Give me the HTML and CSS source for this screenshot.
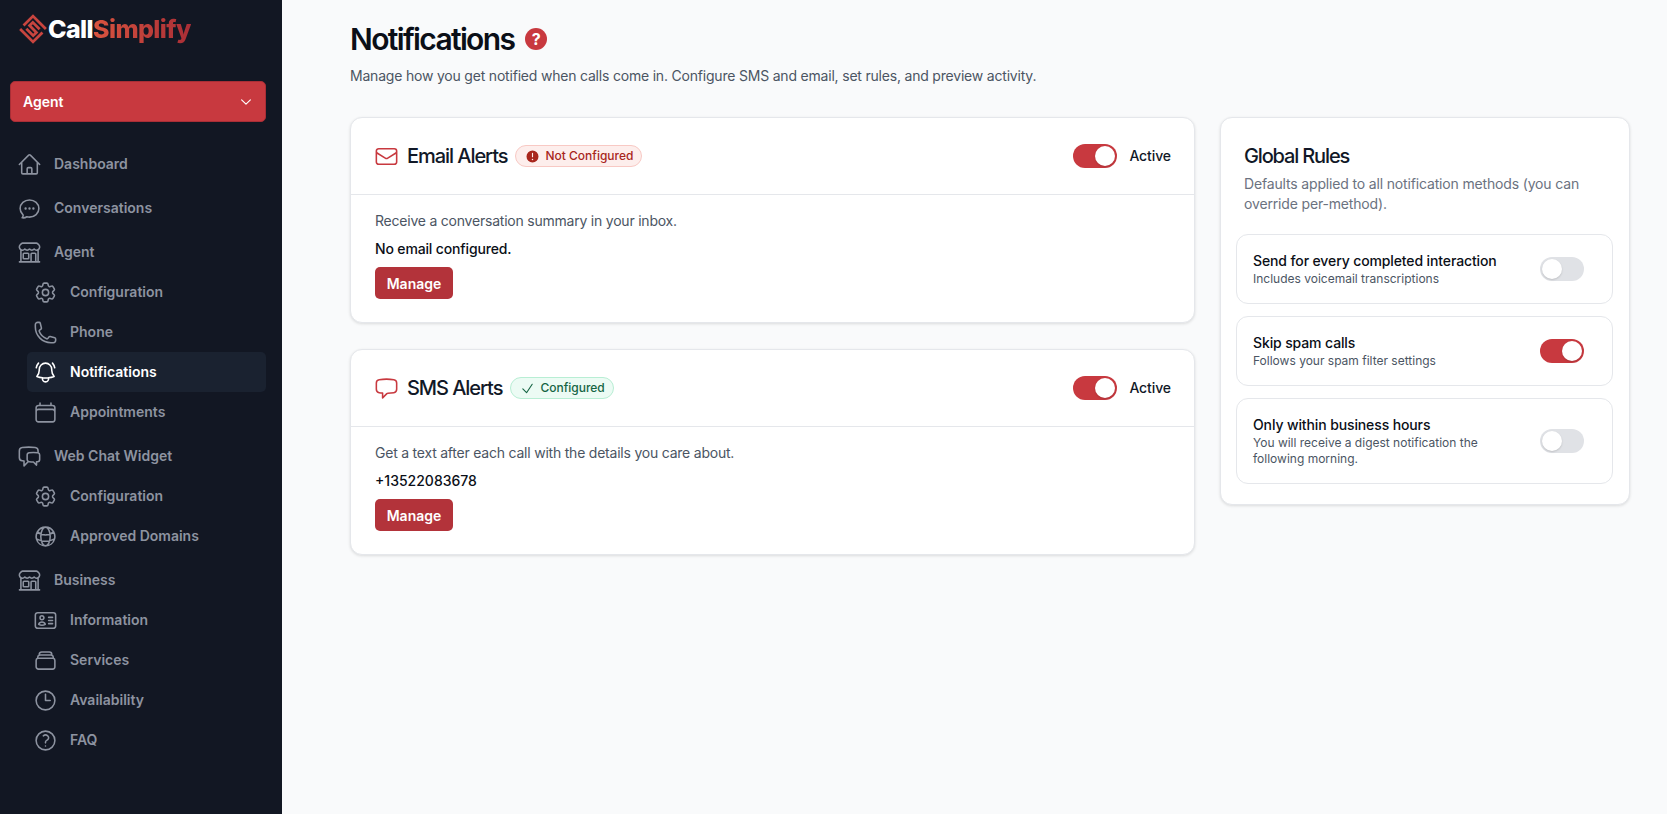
FILE: index.html
```html
<!DOCTYPE html>
<html lang="en">
  <head>
    <meta charset="UTF-8" />
    <meta name="viewport" content="width=device-width, initial-scale=1.0" />
    <title>Notifications</title>
    <link rel="stylesheet" href="styles.css">
  </head>
  <body>
    <svg class="sprite" xmlns="http://www.w3.org/2000/svg">
      <symbol id="i-home" viewBox="0 0 24 24"><path d="M2.25 12l8.954-8.955c.44-.439 1.152-.439 1.591 0L21.75 12M4.5 9.75v10.125c0 .621.504 1.125 1.125 1.125H9.75v-4.875c0-.621.504-1.125 1.125-1.125h2.25c.621 0 1.125.504 1.125 1.125V21h4.125c.621 0 1.125-.504 1.125-1.125V9.75M8.25 21h8.25"/></symbol>
      <symbol id="i-chat" viewBox="0 0 24 24"><path d="M8.625 12a.375.375 0 11-.75 0 .375.375 0 01.75 0zm0 0H8.25m4.125 0a.375.375 0 11-.75 0 .375.375 0 01.75 0zm0 0H12m4.125 0a.375.375 0 11-.75 0 .375.375 0 01.75 0zm0 0h-.375M21 12c0 4.556-4.03 8.25-9 8.25a9.764 9.764 0 01-2.555-.337A5.972 5.972 0 015.41 20.97a5.969 5.969 0 01-.474-.065 4.48 4.48 0 00.978-2.025c.09-.457-.133-.901-.467-1.226C3.93 16.178 3 14.189 3 12c0-4.556 4.03-8.25 9-8.25s9 3.694 9 8.25z"/></symbol>
      <symbol id="i-store" viewBox="0 0 24 24"><path d="M13.5 21v-7.5a.75.75 0 01.75-.75h3a.75.75 0 01.75.75V21m-4.5 0H2.36m11.14 0H18m0 0h3.64m-1.39 0V9.349m-16.5 11.65V9.35m0 0a3.001 3.001 0 003.75-.615A2.993 2.993 0 009.75 9.75c.896 0 1.7-.393 2.25-1.016a2.993 2.993 0 002.25 1.016c.896 0 1.7-.393 2.25-1.016a3.001 3.001 0 003.75.614m-16.5 0a3.004 3.004 0 01-.621-4.72L4.318 3.44A1.5 1.5 0 015.378 3h13.243a1.5 1.5 0 011.06.44l1.19 1.189a3 3 0 01-.621 4.72m-13.5 8.65h3.75a.75.75 0 00.75-.75V13.5a.75.75 0 00-.75-.75H6.75a.75.75 0 00-.75.75v3.75c0 .415.336.75.75.75z"/></symbol>
      <symbol id="i-cog" viewBox="0 0 24 24"><path d="M9.594 3.94c.09-.542.56-.94 1.11-.94h2.593c.55 0 1.02.398 1.11.94l.213 1.281c.063.374.313.686.645.87.074.04.147.083.22.127.324.196.72.257 1.075.124l1.217-.456a1.125 1.125 0 011.37.49l1.296 2.247a1.125 1.125 0 01-.26 1.431l-1.003.827c-.293.24-.438.613-.431.992a6.759 6.759 0 010 .255c-.007.378.138.75.43.99l1.005.828c.424.35.534.954.26 1.43l-1.298 2.247a1.125 1.125 0 01-1.369.491l-1.217-.456c-.355-.133-.75-.072-1.076.124a6.57 6.57 0 01-.22.128c-.331.183-.581.495-.644.869l-.213 1.28c-.09.543-.56.941-1.11.941h-2.594c-.55 0-1.02-.398-1.11-.94l-.213-1.281c-.062-.374-.312-.686-.644-.87a6.52 6.52 0 01-.22-.127c-.325-.196-.72-.257-1.076-.124l-1.217.456a1.125 1.125 0 01-1.369-.49l-1.297-2.247a1.125 1.125 0 01.26-1.431l1.004-.827c.292-.24.437-.613.43-.992a6.932 6.932 0 010-.255c.007-.378-.138-.75-.43-.99l-1.004-.828a1.125 1.125 0 01-.26-1.43l1.297-2.247a1.125 1.125 0 011.37-.491l1.216.456c.356.133.751.072 1.076-.124.072-.044.146-.087.22-.128.332-.183.582-.495.644-.869l.214-1.281z"/><path d="M15 12a3 3 0 11-6 0 3 3 0 016 0z"/></symbol>
      <symbol id="i-phone" viewBox="0 0 24 24"><path d="M2.25 6.75c0 8.284 6.716 15 15 15h2.25a2.25 2.25 0 002.25-2.25v-1.372c0-.516-.351-.966-.852-1.091l-4.423-1.106c-.44-.11-.902.055-1.173.417l-.97 1.293c-.282.376-.769.542-1.21.38a12.035 12.035 0 01-7.143-7.143c-.162-.441.004-.928.38-1.21l1.293-.97c.363-.271.527-.734.417-1.173L6.963 3.102a1.125 1.125 0 00-1.091-.852H4.5A2.25 2.25 0 002.25 4.5v2.25z"/></symbol>
      <symbol id="i-bell" viewBox="0 0 24 24"><path d="M14.857 17.082a23.848 23.848 0 005.454-1.31A8.967 8.967 0 0118 9.75v-.7V9A6 6 0 006 9v.75a8.967 8.967 0 01-2.312 6.022c1.733.64 3.56 1.085 5.455 1.31m5.714 0a24.255 24.255 0 01-5.714 0m5.714 0a3 3 0 11-5.714 0M3.124 7.5A8.969 8.969 0 015.292 3m13.416 0a8.969 8.969 0 012.168 4.5"/></symbol>
      <symbol id="i-calendar" viewBox="0 0 24 24"><path d="M6.75 3v2.25M17.25 3v2.25M3 18.75V7.5a2.25 2.25 0 012.25-2.25h13.5A2.25 2.25 0 0121 7.5v11.25m-18 0A2.25 2.25 0 005.25 21h13.5A2.25 2.25 0 0021 18.75m-18 0v-7.5A2.25 2.25 0 015.25 9h13.5A2.25 2.25 0 0121 11.25v7.5"/></symbol>
      <symbol id="i-bubbles" viewBox="0 0 24 24"><path d="M20.25 8.511c.884.284 1.5 1.128 1.5 2.097v4.286c0 1.136-.847 2.1-1.98 2.193-.34.027-.68.052-1.02.072v3.091l-3-3c-1.354 0-2.694-.055-4.02-.163a2.115 2.115 0 01-.825-.242m9.345-8.334a2.126 2.126 0 00-.476-.095 48.64 48.64 0 00-8.048 0c-1.131.094-1.976 1.057-1.976 2.192v4.286c0 .837.46 1.58 1.155 1.951m9.345-8.334V6.637c0-1.621-1.152-3.026-2.76-3.235A48.455 48.455 0 0011.25 3c-2.115 0-4.198.137-6.24.402-1.608.209-2.76 1.614-2.76 3.235v6.226c0 1.621 1.152 3.026 2.76 3.235.577.075 1.157.14 1.74.194V21l4.155-4.155"/></symbol>
      <symbol id="i-globe" viewBox="0 0 24 24"><path d="M12 21a9.004 9.004 0 008.716-6.747M12 21a9.004 9.004 0 01-8.716-6.747M12 21c2.485 0 4.5-4.03 4.5-9S14.485 3 12 3m0 18c-2.485 0-4.5-4.03-4.5-9S9.515 3 12 3m0 0a8.997 8.997 0 017.843 4.582M12 3a8.997 8.997 0 00-7.843 4.582m15.686 0A11.953 11.953 0 0112 10.5c-2.998 0-5.74-1.1-7.843-2.918m15.686 0A8.959 8.959 0 0121 12c0 .778-.099 1.533-.284 2.253m0 0A17.919 17.919 0 0112 16.5c-3.162 0-6.133-.815-8.716-2.247m0 0A9.015 9.015 0 013 12c0-1.605.42-3.113 1.157-4.418"/></symbol>
      <symbol id="i-card" viewBox="0 0 24 24"><path d="M15 9h3.75M15 12h3.75M15 15h3.75M4.5 19.5h15a2.25 2.25 0 002.25-2.25V6.75A2.25 2.25 0 0019.5 4.5h-15a2.25 2.25 0 00-2.25 2.25v10.5A2.25 2.25 0 004.5 19.5zm6-10.125a1.875 1.875 0 11-3.75 0 1.875 1.875 0 013.75 0zm1.294 6.336a6.721 6.721 0 01-3.17.789 6.721 6.721 0 01-3.168-.789 3.376 3.376 0 016.338 0z"/></symbol>
      <symbol id="i-stack" viewBox="0 0 24 24"><path d="M6 6.878V6a2.25 2.25 0 012.25-2.25h7.5A2.25 2.25 0 0118 6v.878m-12 0c.235-.083.487-.128.75-.128h10.5c.263 0 .515.045.75.128m-12 0A2.25 2.25 0 004.5 9v.878m13.5-3A2.25 2.25 0 0119.5 9v.878m0 0a2.246 2.246 0 00-.75-.128H5.25c-.263 0-.515.045-.75.128m15 0A2.25 2.25 0 0121 12v6a2.25 2.25 0 01-2.25 2.25H5.25A2.25 2.25 0 013 18v-6c0-.98.626-1.813 1.5-2.122"/></symbol>
      <symbol id="i-clock" viewBox="0 0 24 24"><path d="M12 6v6h4.5m4.5 0a9 9 0 11-18 0 9 9 0 0118 0z"/></symbol>
      <symbol id="i-question" viewBox="0 0 24 24"><path d="M9.879 7.519c1.171-1.025 3.071-1.025 4.242 0 1.172 1.025 1.172 2.687 0 3.712-.203.179-.43.326-.67.442-.745.361-1.45.999-1.45 1.827v.75M21 12a9 9 0 11-18 0 9 9 0 0118 0zm-9 5.25h.008v.008H12v-.008z"/></symbol>
      <symbol id="i-envelope" viewBox="0 0 24 24"><path d="M21.75 6.75v10.5a2.25 2.25 0 01-2.25 2.25h-15a2.25 2.25 0 01-2.25-2.25V6.75m19.5 0A2.25 2.25 0 0019.5 4.5h-15a2.25 2.25 0 00-2.25 2.25m19.5 0v.243a2.25 2.25 0 01-1.07 1.916l-7.5 4.615a2.25 2.25 0 01-2.36 0L3.32 8.91a2.25 2.25 0 01-1.07-1.916V6.75"/></symbol>
      <symbol id="i-sms" viewBox="0 0 24 24"><path d="M2.25 12.76c0 1.6 1.123 2.994 2.707 3.227 1.087.16 2.185.283 3.293.369V21l4.076-4.076a1.526 1.526 0 011.037-.443 48.282 48.282 0 005.68-.494c1.584-.233 2.707-1.626 2.707-3.228V6.741c0-1.602-1.123-2.995-2.707-3.228A48.394 48.394 0 0012 3c-2.392 0-4.744.175-7.043.513C3.373 3.746 2.25 5.14 2.25 6.741v6.018z"/></symbol>
    </svg>

    <div class="app">
      <aside class="sidebar">
        <div class="logo">
          <svg class="logo-mark" viewBox="-4 -4 28 28">
            <g transform="rotate(45 10 10)">
              <path d="M18.5 1.5H1.5V14M1.5 18.5H18.5V6" />
              <path d="M14.5 5.75H5.5V10H14.5V14.25H5.5" />
            </g>
          </svg>
          <span class="logo-call">Call</span><span class="logo-simplify">Simplify</span>
        </div>

        <div class="picker">
          <span>Agent</span>
          <svg class="picker-chevron" viewBox="0 0 24 24"><path d="M19.5 8.25l-7.5 7.5-7.5-7.5" /></svg>
        </div>

        <nav class="nav">
          <a class="nav-item"><svg class="icon"><use href="#i-home" /></svg>Dashboard</a>
          <a class="nav-item"><svg class="icon"><use href="#i-chat" /></svg>Conversations</a>
          <div class="nav-group">
            <a class="nav-item"><svg class="icon"><use href="#i-store" /></svg>Agent</a>
            <a class="nav-item sub"><svg class="icon"><use href="#i-cog" /></svg>Configuration</a>
            <a class="nav-item sub"><svg class="icon"><use href="#i-phone" /></svg>Phone</a>
            <a class="nav-item sub active"><svg class="icon"><use href="#i-bell" /></svg>Notifications</a>
            <a class="nav-item sub"><svg class="icon"><use href="#i-calendar" /></svg>Appointments</a>
          </div>
          <div class="nav-group">
            <a class="nav-item"><svg class="icon"><use href="#i-bubbles" /></svg>Web Chat Widget</a>
            <a class="nav-item sub"><svg class="icon"><use href="#i-cog" /></svg>Configuration</a>
            <a class="nav-item sub"><svg class="icon"><use href="#i-globe" /></svg>Approved Domains</a>
          </div>
          <div class="nav-group">
            <a class="nav-item"><svg class="icon"><use href="#i-store" /></svg>Business</a>
            <a class="nav-item sub"><svg class="icon"><use href="#i-card" /></svg>Information</a>
            <a class="nav-item sub"><svg class="icon"><use href="#i-stack" /></svg>Services</a>
            <a class="nav-item sub"><svg class="icon"><use href="#i-clock" /></svg>Availability</a>
            <a class="nav-item sub"><svg class="icon"><use href="#i-question" /></svg>FAQ</a>
          </div>
        </nav>
      </aside>

      <main class="main">
        <div class="page-title">
          <h1>Notifications</h1>
          <span class="help">?</span>
        </div>
        <p class="page-sub">Manage how you get notified when calls come in. Configure SMS and email, set rules, and preview activity.</p>

        <div class="columns">
          <div class="methods">
            <section class="card">
              <header class="card-head">
                <svg class="icon method-icon"><use href="#i-envelope" /></svg>
                <h2>Email Alerts</h2>
                <span class="badge badge-bad">
                  <svg class="badge-icon" viewBox="0 0 20 20"><path fill-rule="evenodd" d="M18 10a8 8 0 11-16 0 8 8 0 0116 0zm-8-5a.75.75 0 01.75.75v4.5a.75.75 0 01-1.5 0v-4.5A.75.75 0 0110 5zm0 10a1 1 0 100-2 1 1 0 000 2z" /></svg>
                  Not Configured
                </span>
                <span class="switch on head-switch"></span>
                <span class="switch-label">Active</span>
              </header>
              <div class="card-body">
                <p class="muted">Receive a conversation summary in your inbox.</p>
                <p class="value">No email configured.</p>
                <button class="btn">Manage</button>
              </div>
            </section>

            <section class="card">
              <header class="card-head">
                <svg class="icon method-icon"><use href="#i-sms" /></svg>
                <h2>SMS Alerts</h2>
                <span class="badge badge-ok">
                  <svg class="badge-check" viewBox="0 0 24 24"><path d="M4.5 12.75l6 6 9-13.5" /></svg>
                  Configured
                </span>
                <span class="switch on head-switch"></span>
                <span class="switch-label">Active</span>
              </header>
              <div class="card-body">
                <p class="muted">Get a text after each call with the details you care about.</p>
                <p class="value phone">+13522083678</p>
                <button class="btn">Manage</button>
              </div>
            </section>
          </div>

          <section class="card rules">
            <h2>Global Rules</h2>
            <p class="rules-sub">Defaults applied to all notification methods (you can override per-method).</p>
            <div class="rule">
              <div class="rule-text">
                <div class="rule-title">Send for every completed interaction</div>
                <div class="rule-note">Includes voicemail transcriptions</div>
              </div>
              <span class="switch"></span>
            </div>
            <div class="rule">
              <div class="rule-text">
                <div class="rule-title">Skip spam calls</div>
                <div class="rule-note">Follows your spam filter settings</div>
              </div>
              <span class="switch on"></span>
            </div>
            <div class="rule">
              <div class="rule-text">
                <div class="rule-title">Only within business hours</div>
                <div class="rule-note">You will receive a digest notification the following morning.</div>
              </div>
              <span class="switch"></span>
            </div>
          </section>
        </div>
      </main>
    </div>
  </body>
</html>
```

FILE: styles.css
```css
* {
  box-sizing: border-box;
}
body {
  margin: 0;
  font-family: Inter, "Liberation Sans", sans-serif;
  font-size: 14px;
  line-height: 20px;
  background-color: #f9fafb;
  color: #111827;
}
h1, h2, p {
  margin: 0;
}
.sprite {
  display: none;
}
.icon {
  width: 25px;
  height: 25px;
  flex: none;
  fill: none;
  stroke: currentColor;
  stroke-width: 1.5;
  stroke-linecap: round;
  stroke-linejoin: round;
}
.app {
  display: flex;
  min-height: 814px;
}

/* sidebar */
.sidebar {
  width: 282px;
  flex: none;
  background-color: #121723;
  padding: 14px 16px 0 10px;
}
.logo {
  display: flex;
  align-items: center;
  height: 30px;
  padding-left: 8px;
  font-size: 25px;
  line-height: 32px;
  font-weight: 800;
  letter-spacing: -0.6px;
}
.logo-mark {
  width: 30px;
  height: 30px;
  flex: none;
  fill: none;
  stroke: #c8453f;
  stroke-width: 2.6;
}
.logo-call {
  color: #fff;
}
.logo-simplify {
  background: linear-gradient(90deg, #d9543f, #a92e36);
  -webkit-background-clip: text;
  background-clip: text;
  color: transparent;
}
.picker {
  display: flex;
  align-items: center;
  justify-content: space-between;
  height: 41px;
  margin-top: 37px;
  padding: 0 12px;
  background-color: #c8393f;
  border: 1px solid #a92e36;
  border-radius: 5px;
  color: #fff;
  font-weight: 600;
}
.picker-chevron {
  width: 14px;
  height: 14px;
  fill: none;
  stroke: #fff;
  stroke-width: 2;
  stroke-linecap: round;
  stroke-linejoin: round;
}
.nav {
  display: flex;
  flex-direction: column;
  gap: 4px;
  margin-top: 22px;
}
.nav-item {
  display: flex;
  align-items: center;
  gap: 12px;
  height: 40px;
  padding-left: 7px;
  color: #8d93a0;
  font-weight: 600;
}
.nav-item.sub {
  margin-left: 17px;
  padding-left: 6px;
}
.nav-item.active {
  background-color: #1a2230;
  border-radius: 5px;
  color: #fff;
}

/* main */
.main {
  flex: 1;
  padding: 20px 37px 0 68px;
}
.page-title {
  display: flex;
  align-items: center;
  gap: 11px;
}
h1 {
  font-size: 30px;
  line-height: 38px;
  font-weight: 600;
  letter-spacing: -1.65px;
  color: #0b0f17;
}
.help {
  display: flex;
  align-items: center;
  justify-content: center;
  width: 22px;
  height: 22px;
  border-radius: 50%;
  background-color: #c8393f;
  color: #fff;
  font-size: 16px;
  font-weight: 700;
}
.page-sub {
  margin-top: 8px;
  color: #4b5563;
  letter-spacing: -0.2px;
}
.columns {
  display: grid;
  grid-template-columns: 1fr 410px;
  gap: 25px;
  align-items: start;
  margin-top: 31px;
}
.methods {
  display: flex;
  flex-direction: column;
  gap: 26px;
}
.card {
  background-color: #fff;
  border: 1px solid #e5e7eb;
  border-radius: 12px;
  box-shadow: 0 1px 3px rgba(0, 0, 0, 0.12);
}
.card-head {
  display: flex;
  align-items: center;
  height: 77px;
  padding: 0 23px;
  border-bottom: 1px solid #e5e7eb;
}
.method-icon {
  color: #c8393f;
  margin-right: 8px;
}
h2 {
  font-size: 20px;
  line-height: 28px;
  font-weight: 500;
  letter-spacing: -1.05px;
  color: #111827;
}
.badge {
  display: inline-flex;
  align-items: center;
  gap: 5px;
  height: 22px;
  margin-left: 8px;
  padding: 0 8px 0 9px;
  border-radius: 11px;
  font-size: 12px;
  font-weight: 500;
}
.badge-bad {
  background-color: #fdeeec;
  border: 1px solid #f8c9c4;
  color: #a8261c;
}
.badge-ok {
  background-color: #ecfbf4;
  border: 1px solid #b8eed4;
  color: #166544;
}
.badge-icon {
  width: 15px;
  height: 15px;
  fill: #a8261c;
}
.badge-check {
  width: 15px;
  height: 15px;
  fill: none;
  stroke: #166544;
  stroke-width: 1.8;
  stroke-linecap: round;
  stroke-linejoin: round;
}
.switch {
  position: relative;
  display: block;
  width: 44px;
  height: 24px;
  flex: none;
  border-radius: 12px;
  background-color: #e0e2e6;
}
.switch::after {
  content: "";
  position: absolute;
  top: 2px;
  left: 2px;
  width: 20px;
  height: 20px;
  border-radius: 50%;
  background-color: #fff;
  box-shadow: 0 1px 2px rgba(0, 0, 0, 0.15);
}
.switch.on {
  background-color: #c8393f;
}
.switch.on::after {
  left: 22px;
}
.head-switch {
  margin-left: auto;
}
.switch-label {
  margin-left: 12px;
  font-weight: 500;
  letter-spacing: -0.1px;
}
.card-body {
  padding: 16px 24px 23px;
}
.muted {
  color: #4b5563;
  letter-spacing: -0.22px;
}
.value {
  margin-top: 8px;
  font-weight: 500;
  letter-spacing: -0.15px;
  color: #0b0f17;
}
.value.phone {
  letter-spacing: 0;
}
.btn {
  display: block;
  width: 78px;
  height: 32px;
  margin-top: 8px;
  border: none;
  border-radius: 5px;
  background-color: #b3333a;
  color: #fff;
  font: 600 14px Inter, "Liberation Sans", sans-serif;
}
.rules {
  padding: 24px 16px 20px 15px;
}
.rules h2 {
  padding-left: 8px;
  letter-spacing: -1.15px;
}
.rules-sub {
  margin-top: 4px;
  padding: 0 8px;
  color: #6b7280;
  letter-spacing: -0.16px;
}
.rule {
  display: flex;
  align-items: center;
  justify-content: space-between;
  gap: 24px;
  margin-top: 12px;
  padding: 16px 28px 16px 16px;
  border: 1px solid #e5e7eb;
  border-radius: 12px;
}
.rules-sub + .rule {
  margin-top: 20px;
}
.rule-title {
  font-weight: 500;
  letter-spacing: -0.12px;
  color: #0b0f17;
}
.rule-note {
  font-size: 12px;
  line-height: 16px;
  color: #4b5563;
}
```
